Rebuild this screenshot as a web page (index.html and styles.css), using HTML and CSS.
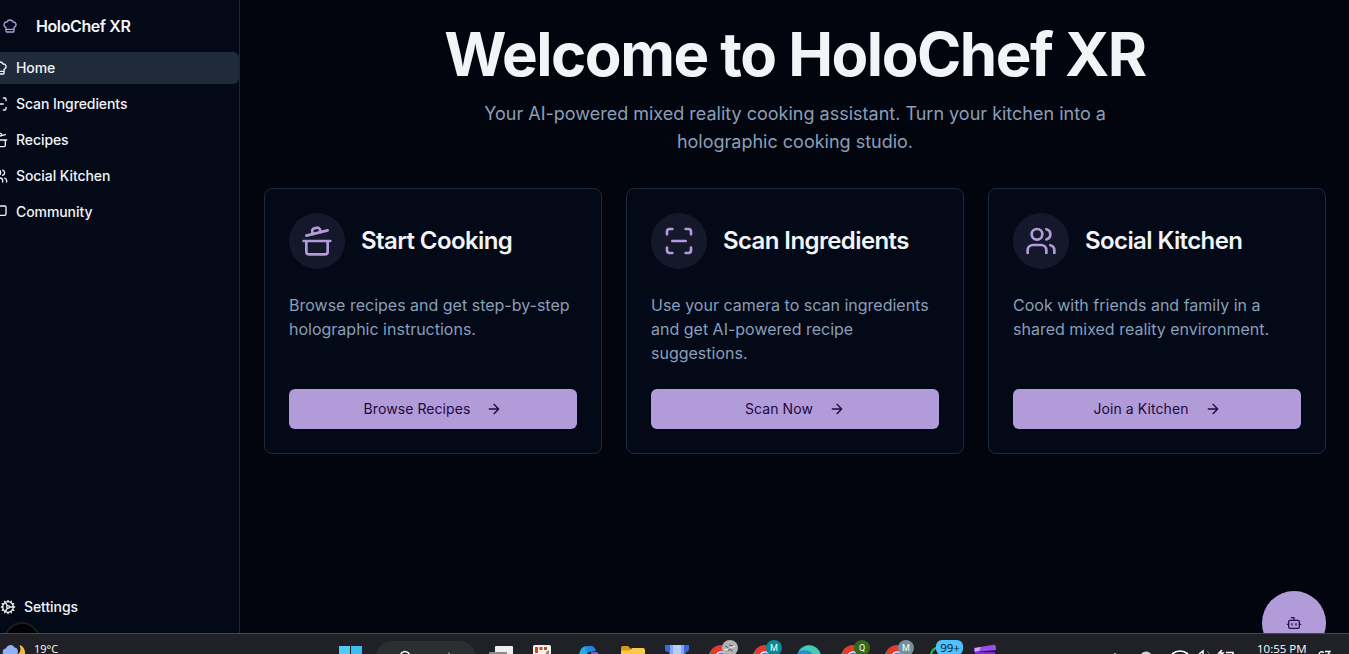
FILE: index.html
```html
<!DOCTYPE html>
<html lang="en">
<head>
<meta charset="utf-8">
<title>HoloChef XR</title>
<link rel="stylesheet" href="styles.css">
</head>
<body>
<svg class="defs" width="0" height="0">
  <symbol id="chef" viewBox="0 0 24 24"><path d="M17 21a1 1 0 0 0 1-1v-5.35c0-.457.316-.844.727-1.041a4 4 0 0 0-2.134-7.589 5 5 0 0 0-9.186 0 4 4 0 0 0-2.134 7.588c.411.198.727.585.727 1.041V20a1 1 0 0 0 1 1Z"/><path d="M6 17h12"/></symbol>
  <symbol id="scan" viewBox="0 0 24 24"><path d="M3 7V5a2 2 0 0 1 2-2h2M17 3h2a2 2 0 0 1 2 2v2M21 17v2a2 2 0 0 1-2 2h-2M7 21H5a2 2 0 0 1-2-2v-2M7 12h10"/></symbol>
  <symbol id="pot" viewBox="0 0 24 24"><path d="M2 12h20M20 12v8a2 2 0 0 1-2 2H6a2 2 0 0 1-2-2v-8M4 8l16-4"/><path d="m8.86 6.78-.45-1.81a2 2 0 0 1 1.45-2.43l1.94-.48a2 2 0 0 1 2.43 1.46l.45 1.8"/></symbol>
  <symbol id="users" viewBox="0 0 24 24"><path d="M16 21v-2a4 4 0 0 0-4-4H6a4 4 0 0 0-4 4v2"/><circle cx="9" cy="7" r="4"/><path d="M22 21v-2a4 4 0 0 0-3-3.87M16 3.13a4 4 0 0 1 0 7.75"/></symbol>
  <symbol id="message" viewBox="0 0 24 24"><path d="M21 15a2 2 0 0 1-2 2H7l-4 4V5a2 2 0 0 1 2-2h14a2 2 0 0 1 2 2z"/></symbol>
  <symbol id="cog" viewBox="0 0 24 24"><path d="M12 20a8 8 0 1 0 0-16 8 8 0 0 0 0 16Z"/><path d="M12 14a2 2 0 1 0 0-4 2 2 0 0 0 0 4ZM12 2v2M12 22v-2M17 20.66l-1-1.73M11 10.27 7 3.34M20.66 17l-1.73-1M3.34 7l1.73 1M14 12h8M2 12h2M20.66 7l-1.73 1M3.34 17l1.73-1M17 3.34l-1 1.73M11 13.73l-4 6.93"/></symbol>
  <symbol id="arrow" viewBox="0 0 24 24"><path d="M5 12h14M12 5l7 7-7 7"/></symbol>
  <symbol id="bot" viewBox="0 0 24 24"><path d="M12 8V4H8"/><rect width="16" height="12" x="4" y="8" rx="2"/><path d="M2 14h2M20 14h2M15 13v2M9 13v2"/></symbol>
  <symbol id="chrome" viewBox="0 0 44 20"><circle cx="22" cy="23" r="12" fill="#e33b2e"/><path d="M10 23a12 12 0 0 1 1-5l6 5z" fill="#29a04a"/><circle cx="22" cy="23" r="5.800" fill="#fff"/><circle cx="22" cy="23" r="4.600" fill="#3e82ee"/></symbol>
</svg>

<div class="app">
  <aside class="sidebar">
    <div class="brand"><svg class="icon"><use href="#chef"/></svg><span>HoloChef XR</span></div>
    <nav class="nav">
      <a class="nav-item active"><svg class="icon"><use href="#chef"/></svg>Home</a>
      <a class="nav-item"><svg class="icon"><use href="#scan"/></svg>Scan Ingredients</a>
      <a class="nav-item"><svg class="icon"><use href="#pot"/></svg>Recipes</a>
      <a class="nav-item"><svg class="icon"><use href="#users"/></svg>Social Kitchen</a>
      <a class="nav-item"><svg class="icon"><use href="#message"/></svg>Community</a>
    </nav>
    <a class="settings"><svg class="icon"><use href="#cog"/></svg>Settings</a>
    <div class="dev-badge"></div>
  </aside>

  <main class="main">
    <header class="hero">
      <h1>Welcome to HoloChef XR</h1>
      <p>Your AI-powered mixed reality cooking assistant. Turn your kitchen into a holographic cooking studio.</p>
    </header>
    <section class="cards">
      <article class="card">
        <div class="card-head"><span class="disc"><svg class="icon-lg"><use href="#pot"/></svg></span><h2>Start Cooking</h2></div>
        <p>Browse recipes and get step-by-step holographic instructions.</p>
        <a class="button">Browse Recipes<svg class="icon"><use href="#arrow"/></svg></a>
      </article>
      <article class="card">
        <div class="card-head"><span class="disc"><svg class="icon-lg"><use href="#scan"/></svg></span><h2>Scan Ingredients</h2></div>
        <p>Use your camera to scan ingredients and get AI-powered recipe suggestions.</p>
        <a class="button">Scan Now<svg class="icon"><use href="#arrow"/></svg></a>
      </article>
      <article class="card">
        <div class="card-head"><span class="disc"><svg class="icon-lg"><use href="#users"/></svg></span><h2>Social Kitchen</h2></div>
        <p>Cook with friends and family in a shared mixed reality environment.</p>
        <a class="button">Join a Kitchen<svg class="icon"><use href="#arrow"/></svg></a>
      </article>
    </section>
    <div class="fab"><svg class="icon"><use href="#bot"/></svg></div>
  </main>
</div>

<footer class="taskbar">
  <div class="weather">
    <svg width="34" height="20"><path d="M18 20c3-2 3-5 1.500-9 4 1 6 5 5.500 9z" fill="#f5b93c"/><path d="M3 20c-1-4 1-5.500 3-5.500 1-4 7-5 8.500-1 3 0 4 3.500 3 6.500z" fill="#8fb4f5"/></svg>
    <span>19°C</span>
  </div>
  <div class="apps">
    <svg width="46" height="20"><rect x="11" y="12" width="11" height="9" fill="#52c9f7"/><rect x="23" y="12" width="11" height="9" fill="#3dbcf3"/></svg>
    <div class="search"><svg width="100" height="13"><circle cx="29" cy="15" r="4.500" fill="none" stroke="#fff" stroke-width="1.500"/><path d="M73 11.500v2" stroke="#ccc"/></svg></div>
    <svg width="48" height="20"><rect x="19" y="12" width="18" height="9" rx="1" fill="#eee"/><rect x="13" y="18" width="18" height="3" rx="1" fill="#8b8b8b"/></svg>
    <svg width="43" height="20"><rect x="9" y="11" width="18" height="10" rx="1.500" fill="#f1f1f1"/><path d="M11 14.500h13M12.500 16v5" stroke="#d9431e" stroke-width="3" stroke-dasharray="3 1.500"/><path d="M22 21v-3l3-2v5z" fill="#888"/></svg>
    <svg width="44" height="20"><path d="M12 20c2-6 4-8 8-8h4c3 0 4 2 5 5l-7 1-3 3z" fill="#2684dd"/><path d="M12 21c2-6 3-8 6-8l2 8z" fill="#22b0dd"/><path d="M24 21v-3h5c2 0 2 1 3 3z" fill="#8a55ca"/></svg>
    <svg width="44" height="20"><path d="M10 14a2 2 0 0 1 2-2h5l3 3v6H10z" fill="#d99a13"/><path d="M10 16.500h9l2-2.500h11a2 2 0 0 1 2 2v5H10z" fill="#fbc94b"/></svg>
    <svg width="44" height="20"><path d="M10 11h24v4a3 3 0 0 1-3 3v3H14v-3c-3 0-4-1-4-3z" fill="#3c67d6"/><path d="M15 11h3v10h-3zM26 11h3v10h-3z" fill="#82a6fa"/><path d="M18 11h8v10h-8z" fill="#b9cdfb"/></svg>
    <svg width="44" height="20"><use href="#chrome"/><circle cx="31" cy="14" r="8" fill="#b4b4b4"/><path d="M26 12l3 1.500M30 11l4 1M29 16.500l2-1 3 1.500" stroke="#555" fill="none"/><path d="M25 16l4-1M31 13.500l5-1" stroke="#eee"/></svg>
    <svg width="44" height="20"><use href="#chrome"/><circle cx="31" cy="14" r="8" fill="#078b91"/><text x="31" y="17" class="initial">M</text></svg>
    <svg width="44" height="20"><circle cx="22" cy="23" r="12" fill="#1d92cf"/><path d="M12 17a12 12 0 0 1 22 6h-8c0-6-6-8-14-6z" fill="#46ccb0"/></svg>
    <svg width="44" height="20"><use href="#chrome"/><circle cx="31" cy="14" r="8" fill="#33691e"/><text x="31" y="17" class="initial">Q</text></svg>
    <svg width="44" height="20"><use href="#chrome"/><circle cx="31" cy="14" r="8" fill="#78909c"/><text x="31" y="17" class="initial">M</text></svg>
    <svg width="44" height="20"><circle cx="22" cy="23" r="10.500" fill="none" stroke="#25c25d" stroke-width="2"/><rect x="17" y="6" width="27" height="15" rx="6" fill="#4cc2ff"/><text x="31" y="18" class="count">99+</text></svg>
    <svg width="44" height="20"><path d="M11 14l18-3q4-1 4 3v2l-22 2z" fill="#9b4df0"/><path d="M12 18h20v3H12z" fill="#7a2fd0"/><path d="M12 14l6-1-2 4-4 .5z" fill="#d3a5fb"/></svg>
  </div>
  <div class="tray">
    <svg width="148" height="20"><path d="M5 20l1-1 1 1" stroke="#aaa" fill="none"/><path d="M32 20q2-3 6-2.500 3 .5 4 2.500z" fill="#d5d5d5"/><path d="M63 20q8-6 16 0" stroke="#fff" stroke-width="1.700" fill="none"/><path d="M90 20l4-3v3" stroke="#fff" stroke-width="1.500" fill="none"/><path d="M98 17q2 1 2 3" stroke="#777" fill="none"/><path d="M113 16l-3 3h4l-2 2M117 18.500h7v2" stroke="#fff" stroke-width="1.500" fill="none"/></svg>
    <span>10:55 PM</span>
    <svg width="40" height="20"><path d="M15 18.500q-4-2-5 1.500M16 17.500h5l-2 3" stroke="#fff" stroke-width="1.300" fill="none"/></svg>
  </div>
</footer>
</body>
</html>
```
FILE: styles.css
```css
* { box-sizing: border-box; }
body {
  margin: 0;
  height: 654px;
  overflow: hidden;
  display: flex;
  flex-direction: column;
  background: #02050e;
  color: #f2f4f8;
  font-family: Inter, sans-serif;
}
.defs { position: absolute; }
svg { display: block; flex: none; }
.icon, .icon-lg {
  width: 16px;
  height: 16px;
  fill: none;
  stroke: currentColor;
  stroke-width: 2;
  stroke-linecap: round;
  stroke-linejoin: round;
}
.icon-lg { width: 32px; height: 32px; }
.app { display: flex; height: 633px; overflow: hidden; }

.sidebar {
  width: 240px;
  flex: none;
  display: flex;
  flex-direction: column;
  background: #030917;
  border-right: 1px solid #1e2736;
  overflow: hidden;
  position: relative;
}
.brand {
  height: 52px;
  padding-left: 2px;
  display: flex;
  align-items: center;
  gap: 18px;
  font-size: 16px;
  font-weight: 600;
  letter-spacing: -0.4px;
}
.brand .icon { color: #b19cd9; }
.nav { display: flex; flex-direction: column; gap: 4px; margin-left: -16px; }
.nav-item, .settings {
  height: 32px;
  display: flex;
  align-items: center;
  gap: 8px;
  padding-left: 8px;
  font-size: 14px;
  line-height: 20px;
  font-weight: 500;
  letter-spacing: -0.08px;
}
.nav-item.active { background: #1f2a3b; border-radius: 6px; }
.settings { margin-top: auto; margin-bottom: 10px; padding-left: 0; }
.dev-badge {
  position: absolute;
  left: 4px;
  top: 622px;
  width: 36px;
  height: 36px;
  border-radius: 50%;
  background: #030305;
  border: 2px solid #191c22;
}

.main { flex: 1; padding: 24px 23px 0 24px; position: relative; }
.hero { height: 164px; display: flex; flex-direction: column; align-items: center; text-align: center; }
.hero h1 { margin: 0; font-size: 60px; line-height: 60px; font-weight: 700; letter-spacing: -1.5px; white-space: nowrap; }
.hero p { margin: 16px 0 0; width: 700px; font-size: 18px; line-height: 28px; color: #8a9fb8; }
.cards { display: grid; grid-template-columns: repeat(3, 338px); gap: 24px; }
.card {
  height: 266px;
  padding: 24px;
  display: flex;
  flex-direction: column;
  background: #030917;
  border: 1px solid #1e293b;
  border-radius: 8px;
}
.card-head { display: flex; align-items: center; gap: 16px; }
.disc {
  width: 56px;
  height: 56px;
  border-radius: 50%;
  display: grid;
  place-items: center;
  background: #15172a;
  color: #b19cd9;
}
.card h2 { margin: 0; font-size: 24px; line-height: 32px; font-weight: 600; letter-spacing: -0.6px; }
.card p { margin: 24px -8px 0 0; font-size: 16px; line-height: 24px; color: #8a9fb8; }
.button {
  margin-top: auto;
  height: 40px;
  display: flex;
  align-items: center;
  justify-content: center;
  gap: 16px;
  background: #b19cd9;
  color: #22083f;
  border-radius: 6px;
  font-size: 14px;
  line-height: 20px;
  font-weight: 400;
  letter-spacing: 0.08px;
}
.fab {
  position: absolute;
  right: 23px;
  top: 591px;
  width: 64px;
  height: 64px;
  border-radius: 50%;
  display: grid;
  place-items: center;
  background: #b19cd9;
  color: #2c0f50;
}

.taskbar {
  height: 21px;
  display: flex;
  background: #202126;
  border-top: 1px solid #47484c;
  font-family: "Open Sans", sans-serif;
  font-size: 11px;
  line-height: 11px;
  color: #fff;
  overflow: hidden;
}
.weather { width: 328px; display: flex; }
.weather span, .tray span { padding-top: 9px; }
.apps { display: flex; width: 779px; }
.search { width: 100px; height: 33px; margin: 7px 0 0 2px; background: #2d2e32; border-radius: 16px; flex: none; }
.tray { display: flex; flex: 1; justify-content: flex-end; }
.tray span { width: 52px; flex: none; white-space: nowrap; font-size: 11.5px; }
.initial { font: 9px Roboto, sans-serif; fill: #fff; text-anchor: middle; }
.count { font: 11.5px "Open Sans", sans-serif; fill: #07151f; text-anchor: middle; }
```
